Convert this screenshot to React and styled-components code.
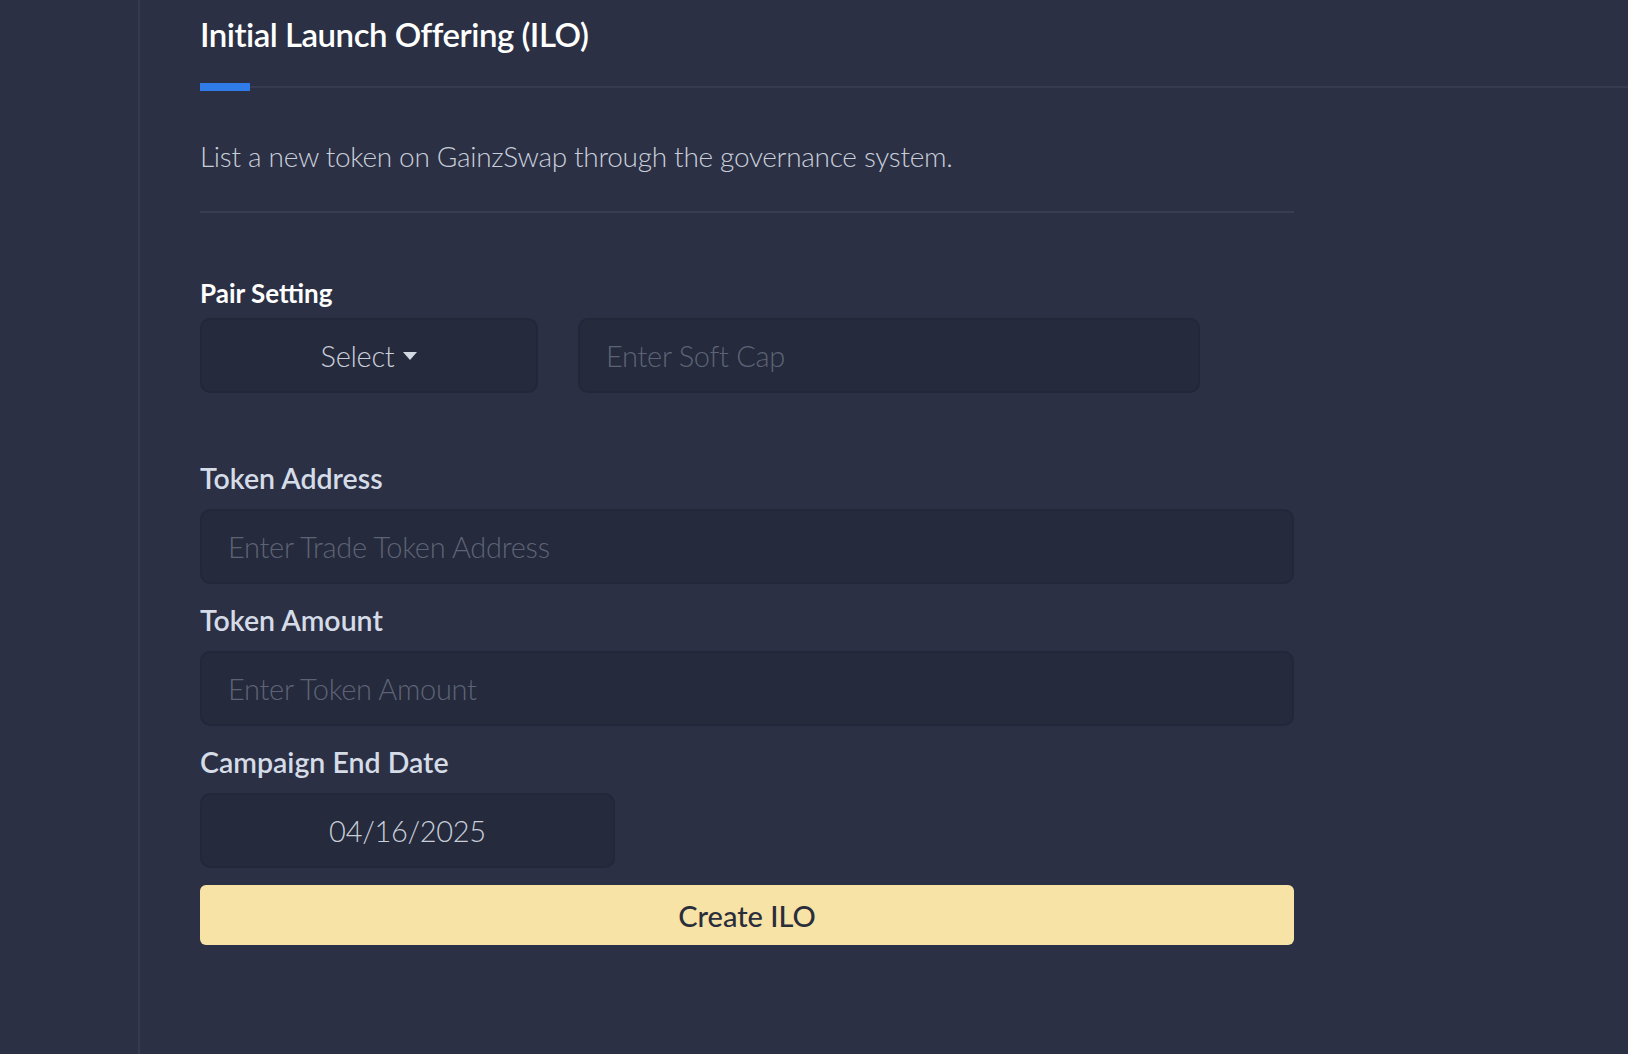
import React from 'react';
import styled, { createGlobalStyle } from 'styled-components';

const GlobalStyle = createGlobalStyle`
    html, body {
        margin: 0;
        padding: 0;
        background: #2b3044;
        font-family: 'Lato', 'Liberation Sans', sans-serif;
    }
    * {
        box-sizing: border-box;
    }
`

const Page = styled.div`
    display: flex;
    min-height: 100vh;
    background: #2b3044;
`
const Sidebar = styled.aside`
    width: 140px;
    flex-shrink: 0;
    border-right: 2px solid #353a4e;
`
const Main = styled.main`
    flex: 1;
    padding: 14px 0 0 60px;
`
const Title = styled.h1`
    margin: 0;
    font-size: 33px;
    line-height: 40px;
    font-weight: 600;
    letter-spacing: -0.5px;
    color: #ffffff;
`
const Track = styled.div`
    display: flex;
    align-items: center;
    height: 8px;
    margin-top: 29px;
`
const Indicator = styled.div`
    width: 50px;
    height: 8px;
    background: #2f7ce9;
`
const TrackLine = styled.div`
    flex: 1;
    height: 2px;
    background: #363b4f;
`
const Content = styled.div`
    width: 1094px;
`
const Subtitle = styled.p`
    margin: 48px 0 0;
    font-size: 28px;
    line-height: 34px;
    font-weight: 300;
    letter-spacing: -0.3px;
    color: #c9ceda;
`
const Divider = styled.hr`
    margin: 38px 0 0;
    border: none;
    height: 2px;
    background: #383d51;
`
const SectionTitle = styled.h3`
    margin: 64px 0 9px;
    font-size: 26px;
    line-height: 32px;
    font-weight: 700;
    color: #ffffff;
`
const Row = styled.div`
    display: flex;
    gap: 40px;
`
const Label = styled.label`
    display: block;
    margin: ${p => p.first ? '68px' : '19px'} 0 14px;
    font-size: 28.5px;
    line-height: 34px;
    font-weight: 600;
    color: #d5dce8;
`
const Field = styled.input`
    display: block;
    width: ${p => p.width || '100%'};
    height: 75px;
    padding: 0 26px;
    border: 2px solid #22273a;
    border-radius: 10px;
    background: #252a3c;
    font-family: 'Lato', 'Liberation Sans', sans-serif;
    font-size: 29px;
    font-weight: 300;
    letter-spacing: -0.3px;
    color: #c9ceda;
    text-align: ${p => p.center ? 'center' : 'left'};
    outline: none;

    &::placeholder {
        color: #5d6376;
    }
`
const SelectButton = styled.button`
    display: flex;
    align-items: center;
    justify-content: center;
    gap: 9px;
    width: 338px;
    height: 75px;
    border: 2px solid #22273a;
    border-radius: 10px;
    background: #252a3c;
    font-family: 'Lato', 'Liberation Sans', sans-serif;
    font-size: 29px;
    font-weight: 300;
    letter-spacing: -0.3px;
    color: #c9ceda;
    cursor: pointer;
`
const Caret = styled.span`
    width: 0;
    height: 0;
    border-left: 7.5px solid transparent;
    border-right: 7.5px solid transparent;
    border-top: 8px solid #d3d9e3;
`
const SubmitButton = styled.button`
    display: block;
    width: 100%;
    height: 60px;
    margin-top: 17px;
    border: none;
    border-radius: 6px;
    background: #f8e3a7;
    font-family: 'Lato', 'Liberation Sans', sans-serif;
    font-size: 29px;
    font-weight: 500;
    color: #2a2e3a;
    cursor: pointer;
`

const App = () => {
    return (
        <Page>
            <GlobalStyle />
            <Sidebar />
            <Main>
                <Title>Initial Launch Offering (ILO)</Title>
                <Track>
                    <Indicator />
                    <TrackLine />
                </Track>
                <Content>
                    <Subtitle>List a new token on GainzSwap through the governance system.</Subtitle>
                    <Divider />

                    <SectionTitle>Pair Setting</SectionTitle>
                    <Row>
                        <SelectButton type='button'>
                            Select <Caret />
                        </SelectButton>
                        <Field width='622px' placeholder='Enter Soft Cap' />
                    </Row>

                    <Label first>Token Address</Label>
                    <Field placeholder='Enter Trade Token Address' />

                    <Label>Token Amount</Label>
                    <Field placeholder='Enter Token Amount' />

                    <Label>Campaign End Date</Label>
                    <Field width='415px' center defaultValue='04/16/2025' />

                    <SubmitButton type='button'>Create ILO</SubmitButton>
                </Content>
            </Main>
        </Page>
    )
};

export default App;
